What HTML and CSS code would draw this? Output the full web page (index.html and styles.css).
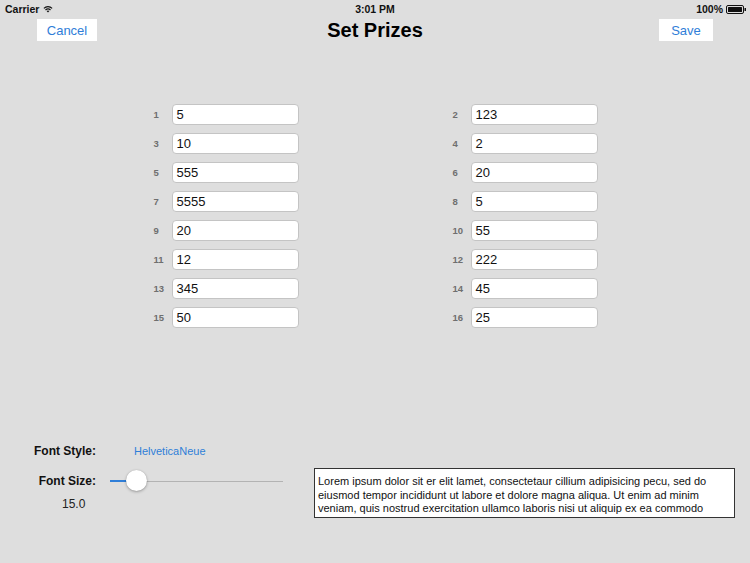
FILE: index.html
```html
<!DOCTYPE html>
<html>
<head>
<meta charset="utf-8">
<link rel="stylesheet" href="styles.css">
</head>
<body>
<div class="screen">
  <div class="status">
    <div class="st-left">
      <span>Carrier</span>
      <svg class="wifi" width="10" height="8" viewBox="0 0 10 8">
        <path d="M5 7.6 L3.6 6.1 A2 2 0 0 1 6.4 6.1 Z" fill="#111"/>
        <path d="M2.5 5 A3.6 3.6 0 0 1 7.5 5" stroke="#111" stroke-width="1.2" fill="none"/>
        <path d="M0.9 3.3 A5.8 5.8 0 0 1 9.1 3.3" stroke="#111" stroke-width="1.2" fill="none"/>
      </svg>
    </div>
    <div class="st-center">3:01 PM</div>
    <div class="st-right">
      <span>100%</span>
      <svg class="battery" width="21" height="9" viewBox="0 0 21 9">
        <rect x="0.5" y="0.5" width="17" height="8" rx="1.5" fill="none" stroke="#111"/>
        <rect x="2" y="2" width="14" height="5" rx="0.5" fill="#111"/>
        <rect x="18.5" y="3" width="1.5" height="3" fill="#111"/>
      </svg>
    </div>
  </div>

  <div class="nav">
    <button class="navbtn">Cancel</button>
    <div class="title">Set Prizes</div>
    <button class="navbtn save">Save</button>
  </div>

  <div class="prizes">
    <div class="col">
      <div class="row"><span class="num">1</span><div class="field">5</div></div>
      <div class="row"><span class="num">3</span><div class="field">10</div></div>
      <div class="row"><span class="num">5</span><div class="field">555</div></div>
      <div class="row"><span class="num">7</span><div class="field">5555</div></div>
      <div class="row"><span class="num">9</span><div class="field">20</div></div>
      <div class="row"><span class="num">11</span><div class="field">12</div></div>
      <div class="row"><span class="num">13</span><div class="field">345</div></div>
      <div class="row"><span class="num">15</span><div class="field">50</div></div>
    </div>
    <div class="col">
      <div class="row"><span class="num">2</span><div class="field">123</div></div>
      <div class="row"><span class="num">4</span><div class="field">2</div></div>
      <div class="row"><span class="num">6</span><div class="field">20</div></div>
      <div class="row"><span class="num">8</span><div class="field">5</div></div>
      <div class="row"><span class="num">10</span><div class="field">55</div></div>
      <div class="row"><span class="num">12</span><div class="field">222</div></div>
      <div class="row"><span class="num">14</span><div class="field">45</div></div>
      <div class="row"><span class="num">16</span><div class="field">25</div></div>
    </div>
  </div>

  <div class="bottom">
    <div class="settings">
      <div class="srow">
        <div class="slabel">Font Style:</div>
        <div class="fontname">HelveticaNeue</div>
      </div>
      <div class="srow">
        <div class="slabel">Font Size:</div>
        <div class="slider">
          <div class="track-on"></div>
          <div class="track-off"></div>
          <div class="thumb"></div>
        </div>
      </div>
      <div class="sizeval">15.0</div>
    </div>
    <div class="preview">Lorem ipsum dolor sit er elit lamet, consectetaur cillium adipisicing pecu, sed do eiusmod tempor incididunt ut labore et dolore magna aliqua. Ut enim ad minim veniam, quis nostrud exercitation ullamco laboris nisi ut aliquip ex ea commodo consequat.</div>
  </div>
</div>
</body>
</html>
```

FILE: styles.css
```css
* { box-sizing: border-box; }
html, body {
  margin: 0;
  padding: 0;
  background: #dedede;
}
body {
  font-family: "Liberation Sans", Arial, sans-serif;
  color: #111;
}
.screen {
  width: 750px;
  height: 563px;
  overflow: hidden;
  display: flex;
  flex-direction: column;
}
.status {
  height: 18px;
  display: flex;
  align-items: center;
  justify-content: space-between;
  padding: 0 3px 0 5px;
  font-size: 10.5px;
  font-weight: bold;
  position: relative;
}
.st-left, .st-right {
  display: flex;
  align-items: center;
  gap: 4px;
}
.st-right { gap: 3px; }
.st-center {
  position: absolute;
  left: 0;
  right: 0;
  text-align: center;
  top: 3px;
}
.wifi { margin-top: -1px; }
.nav {
  height: 22px;
  margin-top: 1px;
  display: flex;
  align-items: center;
  justify-content: space-between;
  padding: 0 37px 0 37px;
}
.navbtn {
  background: #fff;
  border: none;
  height: 22px;
  padding: 0;
  font-family: "Liberation Sans", Arial, sans-serif;
  font-size: 13px;
  color: #2f7ed8;
  width: 60px;
}
.navbtn.save { width: 54px; }
.title {
  font-size: 20px;
  font-weight: bold;
  color: #000;
  margin-right: 6px;
  margin-top: 1px;
}
.prizes {
  margin-top: 63px;
  display: flex;
  justify-content: center;
  gap: 153px;
}
.col {
  width: 146px;
  display: flex;
  flex-direction: column;
  gap: 8px;
}
.row {
  display: flex;
  align-items: center;
  height: 21px;
}
.num {
  width: 19px;
  font-size: 9.5px;
  font-weight: bold;
  color: #6f6f6f;
  padding-left: 1px;
}
.field {
  width: 127px;
  height: 21px;
  background: #fff;
  border: 1px solid #c4c4c4;
  border-radius: 4px;
  font-size: 13px;
  line-height: 19px;
  padding-left: 4px;
  color: #111;
}
.bottom {
  margin-top: 111px;
  display: flex;
}
.settings {
  width: 314px;
  display: flex;
  flex-direction: column;
}
.srow {
  height: 24px;
  display: flex;
  align-items: center;
}
.srow + .srow { margin-top: 6px; }
.slabel {
  width: 96px;
  text-align: right;
  font-size: 12px;
  font-weight: bold;
  color: #111;
}
.fontname {
  margin-left: 38px;
  font-size: 11px;
  color: #2f7ed8;
}
.slider {
  position: relative;
  margin-left: 14px;
  width: 173px;
  height: 24px;
  display: flex;
  align-items: center;
}
.track-on {
  width: 17px;
  height: 2px;
  background: #2f7ed8;
}
.track-off {
  flex: 1;
  height: 1px;
  background: #b3b3b3;
}
.thumb {
  position: absolute;
  left: 16px;
  top: 1px;
  width: 21px;
  height: 21px;
  border-radius: 50%;
  background: #fff;
  box-shadow: 0 1px 3px rgba(0,0,0,0.3), 0 0 1px rgba(0,0,0,0.2);
}
.sizeval {
  margin-top: 4px;
  padding-left: 62px;
  font-size: 12px;
  color: #222;
  height: 15px;
}
.preview {
  margin-top: 29px;
  width: 421px;
  height: 50px;
  overflow: hidden;
  background: #fff;
  border: 1px solid #333;
  font-size: 11px;
  line-height: 13.5px;
  padding: 6px 3px 0 3px;
  color: #111;
}
```
